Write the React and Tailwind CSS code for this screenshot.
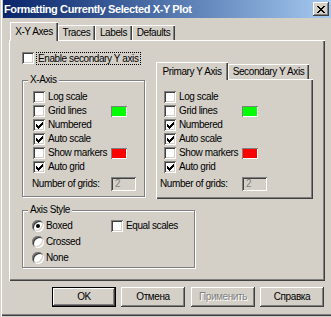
import React from "react";

const Check = ({ checked }) => (
  <span className="flex h-[12px] w-[12px] shrink-0 items-center justify-center bg-white shadow-[inset_1px_1px_#808080,inset_-1px_-1px_#ffffff,inset_2px_2px_#404040,inset_-2px_-2px_#d4d0c8]">
    {checked && (
      <svg width="7" height="7" viewBox="0 0 7 7" shapeRendering="crispEdges">
        <path
          d="M0 2h1v3h-1zM1 3h1v3h-1zM2 4h1v3h-1zM3 3h1v3h-1zM4 2h1v3h-1zM5 1h1v3h-1zM6 0h1v3h-1z"
          fill="#000"
        />
      </svg>
    )}
  </span>
);

const Radio = ({ checked }) => (
  <span className="flex h-[12px] w-[12px] shrink-0 items-center justify-center rounded-full bg-white shadow-[inset_1px_1px_#808080,inset_-1px_-1px_#ffffff,inset_2px_2px_#404040,inset_-2px_-2px_#d4d0c8]">
    {checked && <span className="h-[4px] w-[4px] rounded-full bg-black" />}
  </span>
);

const Row = ({ label, checked, swatch }) => (
  <div className="flex h-[14px] items-center">
    <div className="flex w-[78px] items-center">
      <Check checked={checked} />
      <span className="ml-[3px] whitespace-nowrap">{label}</span>
    </div>
    {swatch}
  </div>
);

const Green = () => (
  <span className="h-[11px] w-[16px] bg-[#00ff00] shadow-[inset_1px_1px_#808080,inset_-1px_-1px_#ffffff]" />
);
const Red = () => (
  <span className="h-[11px] w-[16px] bg-[#ff0000] shadow-[inset_1px_1px_#808080,inset_-1px_-1px_#ffffff]" />
);

const Rows = () => (
  <>
    <Row label="Log scale" />
    <Row label="Grid lines" swatch={<Green />} />
    <Row label="Numbered" checked />
    <Row label="Auto scale" checked />
    <Row label="Show markers" swatch={<Red />} />
    <Row label="Auto grid" checked />
  </>
);

const GridBox = () => (
  <span className="flex h-[14px] w-[25px] items-center bg-[#d4d0c8] pl-[4px] text-[#808080] shadow-[inset_1px_1px_#808080,inset_-1px_-1px_#ffffff,inset_2px_2px_#404040,inset_-2px_-2px_#d4d0c8]">
    2
  </span>
);

const Btn = ({ children, className = "", primary, disabled }) => (
  <div
    className={
      "flex h-[20px] w-[64px] items-center justify-center " +
      (primary
        ? "border border-black shadow-[inset_-1px_-1px_#404040,inset_1px_1px_#ffffff,inset_-2px_-2px_#808080] "
        : "shadow-[inset_-1px_-1px_#404040,inset_1px_1px_#ffffff,inset_-2px_-2px_#808080] ") +
      (disabled ? "text-[#808080] [text-shadow:1px_1px_#ffffff] " : "") +
      className
    }
  >
    {children}
  </div>
);

export default function App() {
  return (
    <div className="flex h-[317px] w-[331px] flex-col overflow-hidden bg-[#d4d0c8] pl-[3px] font-['Liberation_Sans',Arial,sans-serif] text-[10px] leading-[12px] tracking-[-0.4px] text-black shadow-[inset_1px_0_#d4d0c8,inset_2px_0_#ffffff,inset_0_-1px_#d4d0c8,inset_0_-2px_#404040,inset_0_-3px_#808080]">
      {/* Title bar */}
      <div className="flex h-[18px] shrink-0 items-center justify-between bg-gradient-to-r from-[#0a246a] to-[#a6caf0] pl-[1px]">
        <span className="text-[11px] font-bold tracking-[-0.4px] text-white">
          Formatting Currently Selected X-Y Plot
        </span>
        <span className="mr-[2px] flex h-[14px] w-[16px] items-center justify-center bg-[#d4d0c8] shadow-[inset_-1px_-1px_#404040,inset_1px_1px_#ffffff,inset_-2px_-2px_#808080]">
          <svg width="8" height="7" viewBox="0 0 8 7" shapeRendering="crispEdges">
            <path
              d="M0 0h2v1h-2zM6 0h2v1h-2zM1 1h2v1h-2zM5 1h2v1h-2zM2 2h4v1h-4zM3 3h2v1h-2zM2 4h4v1h-4zM1 5h2v1h-2zM5 5h2v1h-2zM0 6h2v1h-2zM6 6h2v1h-2z"
              fill="#000"
            />
          </svg>
        </span>
      </div>

      {/* Main tabs */}
      <div className="ml-[6px] mt-[4px] flex h-[18px] shrink-0 items-end">
        <div className="relative z-10 -mb-[1px] ml-[1px] flex h-[19px] w-[48px] items-start justify-center bg-[#d4d0c8] pt-[4px] shadow-[inset_1px_1px_#ffffff,inset_-1px_0_#404040,inset_-2px_0_#808080]">
          X-Y Axes
        </div>
        <div className="flex h-[15px] w-[37px] items-start justify-center pt-[2px] shadow-[inset_1px_1px_#ffffff,inset_-1px_0_#404040,inset_-2px_0_#808080]">
          Traces
        </div>
        <div className="flex h-[15px] w-[37px] items-start justify-center pt-[2px] shadow-[inset_1px_1px_#ffffff,inset_-1px_0_#404040,inset_-2px_0_#808080]">
          Labels
        </div>
        <div className="flex h-[15px] w-[43px] items-start justify-center pt-[2px] shadow-[inset_1px_1px_#ffffff,inset_-1px_0_#404040,inset_-2px_0_#808080]">
          Defaults
        </div>
      </div>

      {/* Tab panel */}
      <div className="ml-[6px] flex h-[241px] w-[316px] shrink-0 flex-col pl-[13px] pt-[12px] shadow-[inset_1px_1px_#ffffff,inset_-1px_-1px_#404040,inset_-2px_-2px_#808080]">
        <div className="flex h-[12px] items-center">
          <Check />
          <span className="ml-[2px] border border-dotted border-black px-[1px] leading-[11px]">
            Enable secondary Y axis
          </span>
        </div>

        <div className="-mt-[2px] flex items-start">
          {/* X-Axis group */}
          <div className="relative mt-[18px] h-[117px] w-[123px] border border-[#808080] pl-[10px] pt-[9px] shadow-[1px_1px_0_#ffffff,inset_1px_1px_0_#ffffff]">
            <span className="absolute -top-[7px] left-[5px] bg-[#d4d0c8] px-[2px]">X-Axis</span>
            <Rows />
            <div className="mt-[3px] flex h-[14px] items-center">
              <span className="-ml-[1px] w-[79px] whitespace-nowrap">Number of grids:</span>
              <GridBox />
            </div>
          </div>

          {/* Y Axis tab control */}
          <div className="ml-[11px] flex flex-col">
            <div className="flex h-[17px] items-end">
              <div className="relative z-10 -mb-[1px] flex h-[18px] w-[72px] items-start justify-center bg-[#d4d0c8] pt-[4px] shadow-[inset_1px_1px_#ffffff,inset_-1px_0_#404040,inset_-2px_0_#808080]">
                Primary Y Axis
              </div>
              <div className="flex h-[15px] w-[81px] items-start justify-center pt-[2px] shadow-[inset_1px_1px_#ffffff,inset_-1px_0_#404040,inset_-2px_0_#808080]">
                Secondary Y Axis
              </div>
            </div>
            <div className="h-[120px] w-[157px] pl-[8px] pt-[11px] shadow-[inset_1px_1px_#ffffff,inset_-1px_-1px_#404040,inset_-2px_-2px_#808080]">
              <Rows />
              <div className="mt-[3px] flex h-[14px] items-center">
                <span className="-ml-[4px] w-[82px] whitespace-nowrap">Number of grids:</span>
                <GridBox />
              </div>
            </div>
          </div>
        </div>

        {/* Axis style group */}
        <div className="relative mt-[11px] flex h-[58px] w-[173px] border border-[#808080] pl-[9px] pt-[7px] shadow-[1px_1px_0_#ffffff,inset_1px_1px_0_#ffffff]">
          <span className="absolute -top-[7px] left-[5px] bg-[#d4d0c8] px-[2px]">Axis Style</span>
          <div className="flex w-[79px] flex-col">
            <div className="flex h-[16px] items-center">
              <Radio checked />
              <span className="ml-[2px]">Boxed</span>
            </div>
            <div className="flex h-[16px] items-center">
              <Radio />
              <span className="ml-[2px]">Crossed</span>
            </div>
            <div className="flex h-[16px] items-center">
              <Radio />
              <span className="ml-[2px]">None</span>
            </div>
          </div>
          <div className="flex h-[16px] items-center">
            <Check />
            <span className="ml-[3px] whitespace-nowrap">Equal scales</span>
          </div>
        </div>
      </div>

      {/* Buttons */}
      <div className="mt-[6px] flex h-[20px] shrink-0">
        <Btn primary className="ml-[49px]">OK</Btn>
        <Btn className="ml-[5px]">Отмена</Btn>
        <Btn disabled className="ml-[6px]">Применить</Btn>
        <Btn className="ml-[5px]">Справка</Btn>
      </div>
    </div>
  );
}
